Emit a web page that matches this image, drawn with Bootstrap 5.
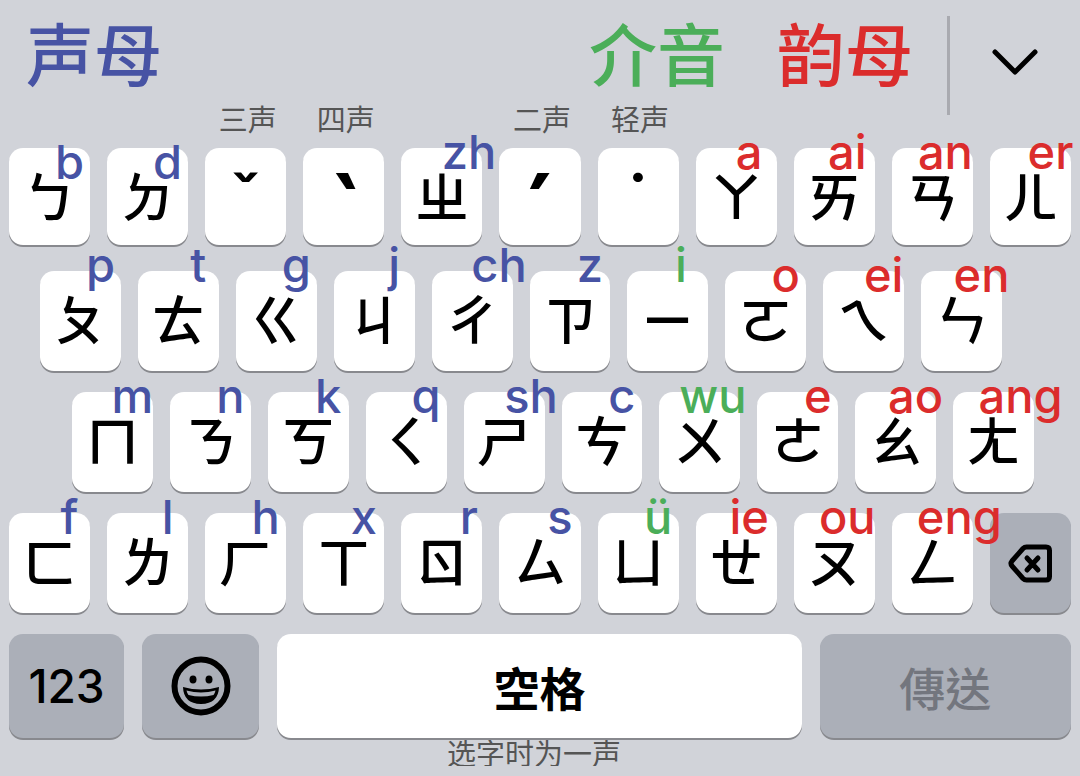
<!DOCTYPE html>
<html lang="zh-Hant">
<head>
<meta charset="utf-8">
<meta name="viewport" content="width=device-width, initial-scale=1">
<title>注音键盘</title>
<link href="https://cdn.jsdelivr.net/npm/bootstrap@5.3.0/dist/css/bootstrap.min.css" rel="stylesheet">
<style>
  :root { --initial: #4753a4; --medial: #4bae59; --final: #db2c2c; }
  body { background: #d1d3d9; color: #000; font-family: "Noto Sans CJK TC", sans-serif; overflow-x: hidden; }
  .c-initial { color: var(--initial); }
  .c-medial { color: var(--medial); }
  .c-final { color: var(--final); }

  .topbar { height: 102px; padding-left: 26px; }
  .legend { font: 500 68px/104px "Noto Sans CJK SC", sans-serif; }
  .legend-final { margin: 0 34px 0 52px; }
  .rule { width: 3px; height: 99px; margin-top: 16px; background: #a9aab0; }
  .collapse-btn { width: 130px; height: 104px; padding: 20px 0 0; border: 0; background: none; }

  .keyrow { display: grid; gap: 17px; padding: 0 9px; grid-template-columns: repeat(11, minmax(0, 1fr)); }
  .row-ten { grid-template-columns: repeat(10, minmax(0, 1fr)); }
  .inset-2 { padding: 0 78px 0 40px; }
  .inset-3 { padding: 0 46px 0 72px; }
  .row-bottom { gap: 18px; grid-template-columns: 115fr 117fr 524fr 251fr; }

  .tones { height: 46px; padding: 0 7px 0 11px; }
  .note { font: 400 29px/32px "Noto Sans CJK SC", sans-serif; color: #555; text-align: center; white-space: nowrap; }
  .caption-note { padding-right: 12px; line-height: 28px; }

  .key { position: relative; height: 100px; margin-bottom: 21px; padding: 0 0 6px; border: 0; border-radius: 14px; background: #fff; color: #000; box-shadow: 0 2px 0 #88898e; display: flex; align-items: center; justify-content: center; }
  .row-first .key { height: 97px; margin-bottom: 26px; padding-bottom: 4px; }
  .row-bottom .key { height: 104px; margin-bottom: 0; padding: 0; }
  .key-grey { background: #abafb8; }
  .key-delete { padding: 0 0 0 1px; }
  .zhuyin { font-size: 54px; line-height: 60px; font-weight: 500; }
  .tone { font: 600 66px/60px Inter, sans-serif; padding-top: 8px; }
  .tone-slant { font-size: 110px; font-weight: 500; padding-top: 44px; }
  .word { font-size: 46px; line-height: 60px; font-weight: 700; }
  .digits { font: 500 46px/60px Inter, sans-serif; }
  .send { color: #73767e; font-weight: 500; }

  /* pinyin reading laid over the key's upper right corner */
  .py { --shift: 20px; --rise: 20px; position: absolute; z-index: 1; left: calc(50% + var(--shift)); top: calc(var(--rise) - 46px); transform: translateX(-50%); font: 500 47px/60px Inter, sans-serif; white-space: nowrap; pointer-events: none; }
  .py-near { --shift: 13px; }
  .py-far { --shift: 27px; }
  .py-low { --rise: 30px; }
  .py-high { --rise: 10px; }
</style>
</head>
<body>
<main>
  <header class="topbar d-flex align-items-start">
    <span class="legend c-initial me-auto">声母</span>
    <span class="legend c-medial">介音</span>
    <span class="legend legend-final c-final">韵母</span>
    <span class="rule"></span>
    <button type="button" class="collapse-btn" aria-label="收起键盘">
      <svg width="48" height="28" viewBox="0 0 48 28" fill="none" stroke="#000" stroke-width="5" stroke-linecap="round" stroke-linejoin="round"><path d="M4 4 24 24 44 4"/></svg>
    </button>
  </header>

  <div class="keyrow tones">
    <span></span><span></span>
    <span class="note">三声</span><span class="note">四声</span><span></span>
    <span class="note">二声</span><span class="note">轻声</span>
  </div>

  <div class="keyrow row-first">
    <button type="button" class="key"><span class="zhuyin">ㄅ</span><span class="py py-low c-initial">b</span></button>
    <button type="button" class="key"><span class="zhuyin">ㄉ</span><span class="py py-low c-initial">d</span></button>
    <button type="button" class="key"><span class="tone">ˇ</span></button>
    <button type="button" class="key"><span class="tone tone-slant">ˋ</span></button>
    <button type="button" class="key"><span class="zhuyin">ㄓ</span><span class="py py-far c-initial">zh</span></button>
    <button type="button" class="key"><span class="tone tone-slant">ˊ</span></button>
    <button type="button" class="key"><span class="tone">˙</span></button>
    <button type="button" class="key"><span class="zhuyin">ㄚ</span><span class="py py-near c-final">a</span></button>
    <button type="button" class="key"><span class="zhuyin">ㄞ</span><span class="py py-near c-final">ai</span></button>
    <button type="button" class="key"><span class="zhuyin">ㄢ</span><span class="py py-near c-final">an</span></button>
    <button type="button" class="key"><span class="zhuyin">ㄦ</span><span class="py c-final">er</span></button>
  </div>

  <div class="keyrow row-ten inset-2">
    <button type="button" class="key"><span class="zhuyin">ㄆ</span><span class="py py-high c-initial">p</span></button>
    <button type="button" class="key"><span class="zhuyin">ㄊ</span><span class="py py-high c-initial">t</span></button>
    <button type="button" class="key"><span class="zhuyin">ㄍ</span><span class="py py-high c-initial">g</span></button>
    <button type="button" class="key"><span class="zhuyin">ㄐ</span><span class="py py-high c-initial">j</span></button>
    <button type="button" class="key"><span class="zhuyin">ㄔ</span><span class="py py-far py-high c-initial">ch</span></button>
    <button type="button" class="key"><span class="zhuyin">ㄗ</span><span class="py py-high c-initial">z</span></button>
    <button type="button" class="key"><span class="zhuyin">ㄧ</span><span class="py py-near py-high c-medial">i</span></button>
    <button type="button" class="key"><span class="zhuyin">ㄛ</span><span class="py c-final">o</span></button>
    <button type="button" class="key"><span class="zhuyin">ㄟ</span><span class="py c-final">ei</span></button>
    <button type="button" class="key"><span class="zhuyin">ㄣ</span><span class="py c-final">en</span></button>
  </div>

  <div class="keyrow row-ten inset-3">
    <button type="button" class="key"><span class="zhuyin">ㄇ</span><span class="py c-initial">m</span></button>
    <button type="button" class="key"><span class="zhuyin">ㄋ</span><span class="py c-initial">n</span></button>
    <button type="button" class="key"><span class="zhuyin">ㄎ</span><span class="py c-initial">k</span></button>
    <button type="button" class="key"><span class="zhuyin">ㄑ</span><span class="py c-initial">q</span></button>
    <button type="button" class="key"><span class="zhuyin">ㄕ</span><span class="py py-far c-initial">sh</span></button>
    <button type="button" class="key"><span class="zhuyin">ㄘ</span><span class="py c-initial">c</span></button>
    <button type="button" class="key"><span class="zhuyin">ㄨ</span><span class="py py-near c-medial">wu</span></button>
    <button type="button" class="key"><span class="zhuyin">ㄜ</span><span class="py c-final">e</span></button>
    <button type="button" class="key"><span class="zhuyin">ㄠ</span><span class="py c-final">ao</span></button>
    <button type="button" class="key"><span class="zhuyin">ㄤ</span><span class="py py-far c-final">ang</span></button>
  </div>

  <div class="keyrow">
    <button type="button" class="key"><span class="zhuyin">ㄈ</span><span class="py c-initial">f</span></button>
    <button type="button" class="key"><span class="zhuyin">ㄌ</span><span class="py c-initial">l</span></button>
    <button type="button" class="key"><span class="zhuyin">ㄏ</span><span class="py c-initial">h</span></button>
    <button type="button" class="key"><span class="zhuyin">ㄒ</span><span class="py c-initial">x</span></button>
    <button type="button" class="key"><span class="zhuyin">ㄖ</span><span class="py py-far c-initial">r</span></button>
    <button type="button" class="key"><span class="zhuyin">ㄙ</span><span class="py c-initial">s</span></button>
    <button type="button" class="key"><span class="zhuyin">ㄩ</span><span class="py c-medial">ü</span></button>
    <button type="button" class="key"><span class="zhuyin">ㄝ</span><span class="py py-near c-final">ie</span></button>
    <button type="button" class="key"><span class="zhuyin">ㄡ</span><span class="py py-near c-final">ou</span></button>
    <button type="button" class="key"><span class="zhuyin">ㄥ</span><span class="py py-far c-final">eng</span></button>
    <button type="button" class="key key-grey key-delete" aria-label="删除">
      <svg width="46" height="40" viewBox="0 0 46 40" fill="none" stroke="#000" stroke-width="5" stroke-linecap="round" stroke-linejoin="round"><path d="M18.500 4H38Q41.500 4 41.500 7.500V33.500Q41.500 37 38 37H18.500Q16.500 37 15 35.500L4 23Q2 20.500 4 18L15 5.500Q16.500 4 18.500 4Z"/><path d="M19 15 30 27M30 15 19 27"/></svg>
    </button>
  </div>

  <div class="keyrow row-bottom">
    <button type="button" class="key key-grey digits">123</button>
    <button type="button" class="key key-grey" aria-label="表情符号">
      <svg width="60" height="60" viewBox="0 0 60 60"><circle cx="30" cy="30" r="26.500" fill="none" stroke="#000" stroke-width="6"/><ellipse cx="22" cy="23.500" rx="3.500" ry="4"/><ellipse cx="38" cy="23.500" rx="3.500" ry="4"/><path d="M12 31Q30 36 48 31Q47.500 47.500 30 48Q12.500 47.500 12 31Z"/><path d="M15.500 34.500Q30 38.500 44.500 34.500Q44 37 42.500 39Q30 42 17.500 39Q16 37 15.500 34.500Z" fill="#abafb8"/></svg>
    </button>
    <button type="button" class="key word">空格</button>
    <button type="button" class="key key-grey word send">傳送</button>
  </div>
  <p class="note caption-note mb-0">选字时为一声</p>
</main>
<script src="https://cdn.jsdelivr.net/npm/bootstrap@5.3.0/dist/js/bootstrap.bundle.min.js"></script>
</body>
</html>
